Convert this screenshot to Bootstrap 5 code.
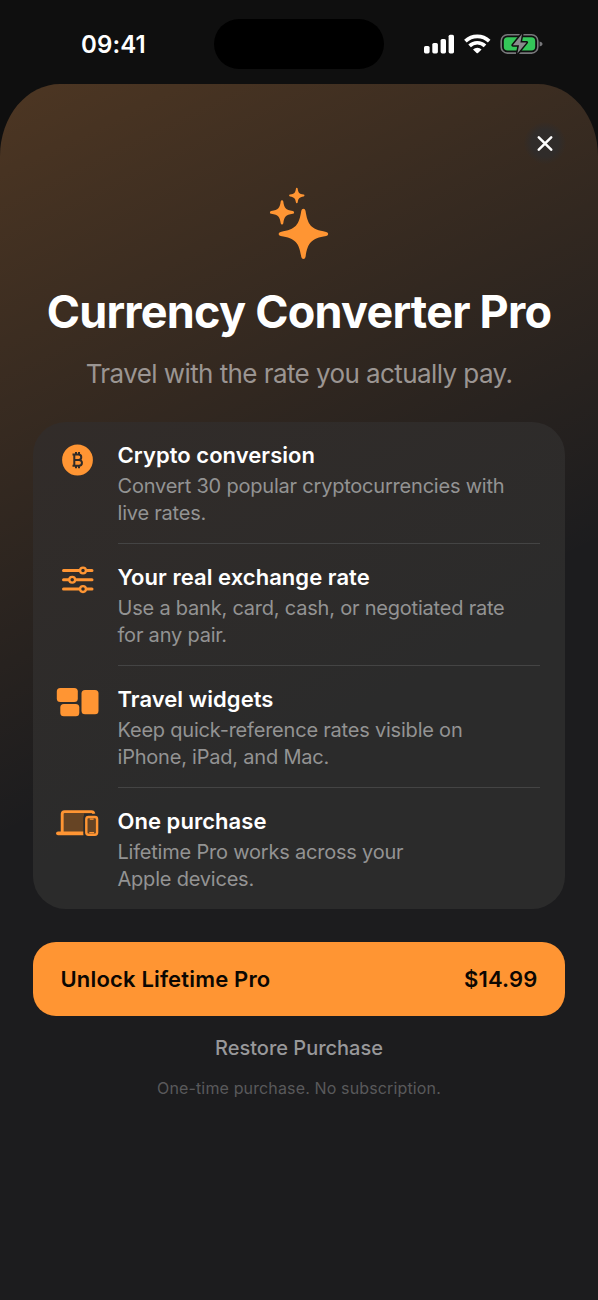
<!DOCTYPE html>
<html lang="en" data-bs-theme="dark">
<head>
<meta charset="utf-8">
<meta name="viewport" content="width=device-width, initial-scale=1">
<title>Currency Converter Pro</title>
<link href="https://cdn.jsdelivr.net/npm/bootstrap@5.3.0/dist/css/bootstrap.min.css" rel="stylesheet">
<style>
  :root { --brand: #ff9533; }
  body { background: #0f0f0f; font-family: Inter, "Liberation Sans", sans-serif; color: #fff; height: 1300px; overflow: hidden; }
  .status-bar { height: 84px; padding: 0 55px 0 81px; }
  .clock { font-size: 24px; font-weight: 600; line-height: 30px; margin-top: 30px; letter-spacing: .1px; width: 133px; }
  .island { width: 170px; height: 50px; margin-top: 19px; background: #000; }
  .signals { margin-top: 32px; width: 121px; }
  .sheet { height: 1216px; border-radius: 60px 60px 0 0 / 72px 72px 0 0; padding: 0 33px;
    background: linear-gradient(153.8deg, rgba(255,149,51,.215), rgba(255,149,51,0) 50%), #1c1c1e; }
  .close-btn { width: 42px; height: 42px; margin: 38px -1px 0 auto; border-radius: 50%; background: radial-gradient(circle, #302c2a 45%, rgba(48,44,42,0) 72%); border: 0; padding: 0; }
  .sparkles { margin-top: 22px; }
  .hero-title { font-size: 45px; line-height: 54px; font-weight: 700; letter-spacing: -.77px; margin: 25px -20px 0; white-space: nowrap; }
  .hero-sub { font-size: 26px; line-height: 32px; color: #9b9592; margin: 19px 0 0; letter-spacing: -.58px; white-space: nowrap; }
  .feature-card { margin-top: 32px; height: 487px; border-radius: 33px; background: linear-gradient(153.8deg, #322c29, #2b2b2b 60%); }
  .feature { height: 122px; padding-right: 25px; }
  .feature-icon { width: 84.5px; padding-left: 23px; }
  .feature-icon svg { display: block; margin-top: 19.8px; }
  .feature-text { border-bottom: 1px solid #444; padding-top: 18px; }
  .feature:last-child .feature-text { border-color: transparent; }
  .feature-text h2 { font-size: 22px; line-height: 30px; font-weight: 600; margin: 0; letter-spacing: .05px; }
  .feature-text p { font-size: 20px; line-height: 27px; color: #939393; margin: 2.5px 0 0; letter-spacing: -.21px; white-space: nowrap; }
  .buy-btn { margin-top: 33px; height: 74px; border-radius: 23px; background: var(--brand); color: #0c0702; font-size: 22px; font-weight: 600; letter-spacing: .17px; padding: 1px 27.5px 0; border: 0; width: 100%; }
  .restore { margin-top: 17.5px; font-size: 20px; line-height: 28px; font-weight: 500; color: #98989a; }
  .fine-print { margin-top: 14.5px; font-size: 16px; line-height: 24px; letter-spacing: .14px; color: #59595b; }
</style>
</head>
<body>
<header class="status-bar d-flex align-items-start">
  <div class="clock">09:41</div>
  <div class="island rounded-pill"></div>
  <svg class="signals ms-auto" height="24" viewBox="422 32 121 24" aria-hidden="true">
    <g fill="#fff">
      <rect x="424" y="46" width="5.6" height="7.4" rx="1.6"/>
      <rect x="432.3" y="43" width="5.6" height="10.4" rx="1.6"/>
      <rect x="440.6" y="39" width="5.4" height="14.4" rx="1.6"/>
      <rect x="448.6" y="34.7" width="5.4" height="18.7" rx="1.6"/>
      <path d="M473 49.5a6 6 0 0 1 8.6 0l-3.6 3.5q-.7.7-1.4 0z"/>
    </g>
    <g fill="none" stroke="#fff" stroke-width="3.7">
      <path d="M465.4 41.2a17.2 17.2 0 0 1 23.8 0M469.6 45.9a11 11 0 0 1 15.4 0"/>
    </g>
    <rect x="501.2" y="34.7" width="36.6" height="18.4" rx="6.2" fill="none" stroke="#77777a" stroke-width="1.6"/>
    <rect x="503.8" y="37.3" width="31.4" height="13.2" rx="3.8" fill="#34c759"/>
    <path d="M539.6 41.4q3 .8 3 2.6t-3 2.6z" fill="#77777a"/>
    <path d="M522 34 512.8 45.2h6.2l-1.6 8.4 9.2-11.2h-6.2z" fill="#8a8a8d" stroke="#0f0f0f" stroke-width="3" stroke-linejoin="round" paint-order="stroke"/>
  </svg>
</header>

<main class="sheet d-flex flex-column">
  <button class="close-btn d-flex align-items-center justify-content-center flex-shrink-0" aria-label="Close">
    <svg width="16" height="16" viewBox="0 0 16 16"><path d="M1.8 2.3 14.2 14.7M14.2 2.3 1.8 14.7" stroke="#fff" stroke-width="2.5" stroke-linecap="round"/></svg>
  </button>
  <svg class="sparkles mx-auto flex-shrink-0" width="60" height="74" viewBox="269 186 60 74" fill="#ff9533">
    <path d="M303.4 208.8q1.7 0 2.1 2c2.2 14 5.2 18.7 20.7 21.1q2 .3 2 2t-2 2c-15.5 2.4-18.5 7.1-20.7 21.1q-.4 2-2.1 2t-2.1-2c-2.2-14-5.2-18.7-20.7-21.1q-2-.3-2-2t2-2c15.5-2.4 18.5-7.1 20.7-21.1q.4-2 2.1-2z"/>
    <path d="M282 200.3q1.1 0 1.3 1.3c.9 6.5 2.2 8.4 9.5 9.5q1.3.2 1.3 1.3t-1.3 1.3c-7.3 1.1-8.6 3-9.5 9.5q-.2 1.3-1.3 1.3t-1.3-1.3c-.9-6.5-2.2-8.4-9.5-9.5q-1.3-.2-1.3-1.3t1.3-1.3c7.3-1.1 8.6-3 9.5-9.5q.2-1.3 1.3-1.3z"/>
    <path d="M296.8 187.8q.8 0 .9.9c.6 4.1 1.5 5.1 5.9 5.9q.9.2.9.9t-.9.9c-4.4.8-5.3 1.8-5.9 5.9q-.1.9-.9.9t-.9-.9c-.6-4.1-1.5-5.1-5.9-5.9q-.9-.2-.9-.9t.9-.9c4.4-.8 5.3-1.8 5.9-5.9q.1-.9.9-.9z"/>
  </svg>
  <h1 class="hero-title text-center">Currency Converter Pro</h1>
  <p class="hero-sub text-center">Travel with the rate you actually pay.</p>

  <section class="feature-card flex-shrink-0">
    <div class="feature d-flex">
      <div class="feature-icon flex-shrink-0">
        <svg width="44" height="36" viewBox="56 442 44 36">
          <circle cx="77.5" cy="460" r="15.4" fill="#ff9533"/>
          <path d="M74.3 454.4h4.2a2.7 2.7 0 0 1 0 5.5h-4.2zM74.3 459.9h4.7a2.9 2.9 0 0 1 0 5.9h-4.7zM76 452v2.5M79 452v2.5M76 465.6v2.6M79 465.6v2.6M72.500 454.400h2M72.500 465.800h2" fill="none" stroke="#2f2a27" stroke-width="2"/>
        </svg>
      </div>
      <div class="feature-text flex-grow-1"><h2>Crypto conversion</h2><p>Convert 30 popular cryptocurrencies with<br>live rates.</p></div>
    </div>
    <div class="feature d-flex">
      <div class="feature-icon flex-shrink-0">
        <svg width="44" height="36" viewBox="56 564 44 36" fill="none" stroke="#ff9533">
          <path d="M63.5 570.5H92M63.5 579.8H92M63.5 589.1H92" stroke-width="3" stroke-linecap="round"/>
          <g fill="#2d2b29" stroke-width="2.3"><circle cx="83" cy="570.5" r="2.9"/><circle cx="72.2" cy="579.8" r="2.9"/><circle cx="83" cy="589.1" r="2.9"/></g>
        </svg>
      </div>
      <div class="feature-text flex-grow-1"><h2>Your real exchange rate</h2><p>Use a bank, card, cash, or negotiated rate<br>for any pair.</p></div>
    </div>
    <div class="feature d-flex">
      <div class="feature-icon flex-shrink-0">
        <svg width="44" height="36" viewBox="56 686 44 36" fill="#ff9533">
          <rect x="56.8" y="688" width="21" height="14" rx="3.5"/><rect x="60.3" y="704" width="19" height="12.3" rx="3.5"/><rect x="81.5" y="690" width="17" height="24.3" rx="3.5"/>
        </svg>
      </div>
      <div class="feature-text flex-grow-1"><h2>Travel widgets</h2><p>Keep quick-reference rates visible on<br>iPhone, iPad, and Mac.</p></div>
    </div>
    <div class="feature d-flex">
      <div class="feature-icon flex-shrink-0">
        <svg width="44" height="36" viewBox="56 808 44 36">
          <path d="M62 833V814q0-2.500 2.500-2.500H91q2 0 2.300 2H84v19.500z" fill="#664424"/>
          <path d="M62.2 832V814q0-2.400 2.400-2.400H91.500q2 0 2.400 2.200" fill="none" stroke="#ff9533" stroke-width="2.9"/>
          <path d="M58 833.300H83.500" stroke="#ff9533" stroke-width="3.8" stroke-linecap="round"/>
          <rect x="83.3" y="814" width="17" height="24" rx="4" fill="#2b2b2b"/>
          <rect x="86.3" y="817" width="10.8" height="17.7" rx="2.2" fill="#664424" stroke="#ff9533" stroke-width="2.4"/>
          <path d="M89.8 819.2h3.8M89.3 832.7h4.8" stroke="#ff9533" stroke-width="1.3"/>
        </svg>
      </div>
      <div class="feature-text flex-grow-1"><h2>One purchase</h2><p>Lifetime Pro works across your<br>Apple devices.</p></div>
    </div>
  </section>

  <button class="buy-btn d-flex align-items-center justify-content-between flex-shrink-0"><span>Unlock Lifetime Pro</span><span>$14.99</span></button>
  <div class="text-center restore"><span>Restore Purchase</span></div>
  <div class="text-center fine-print"><span>One-time purchase. No subscription.</span></div>
</main>
<script src="https://cdn.jsdelivr.net/npm/bootstrap@5.3.0/dist/js/bootstrap.bundle.min.js"></script>
</body>
</html>
